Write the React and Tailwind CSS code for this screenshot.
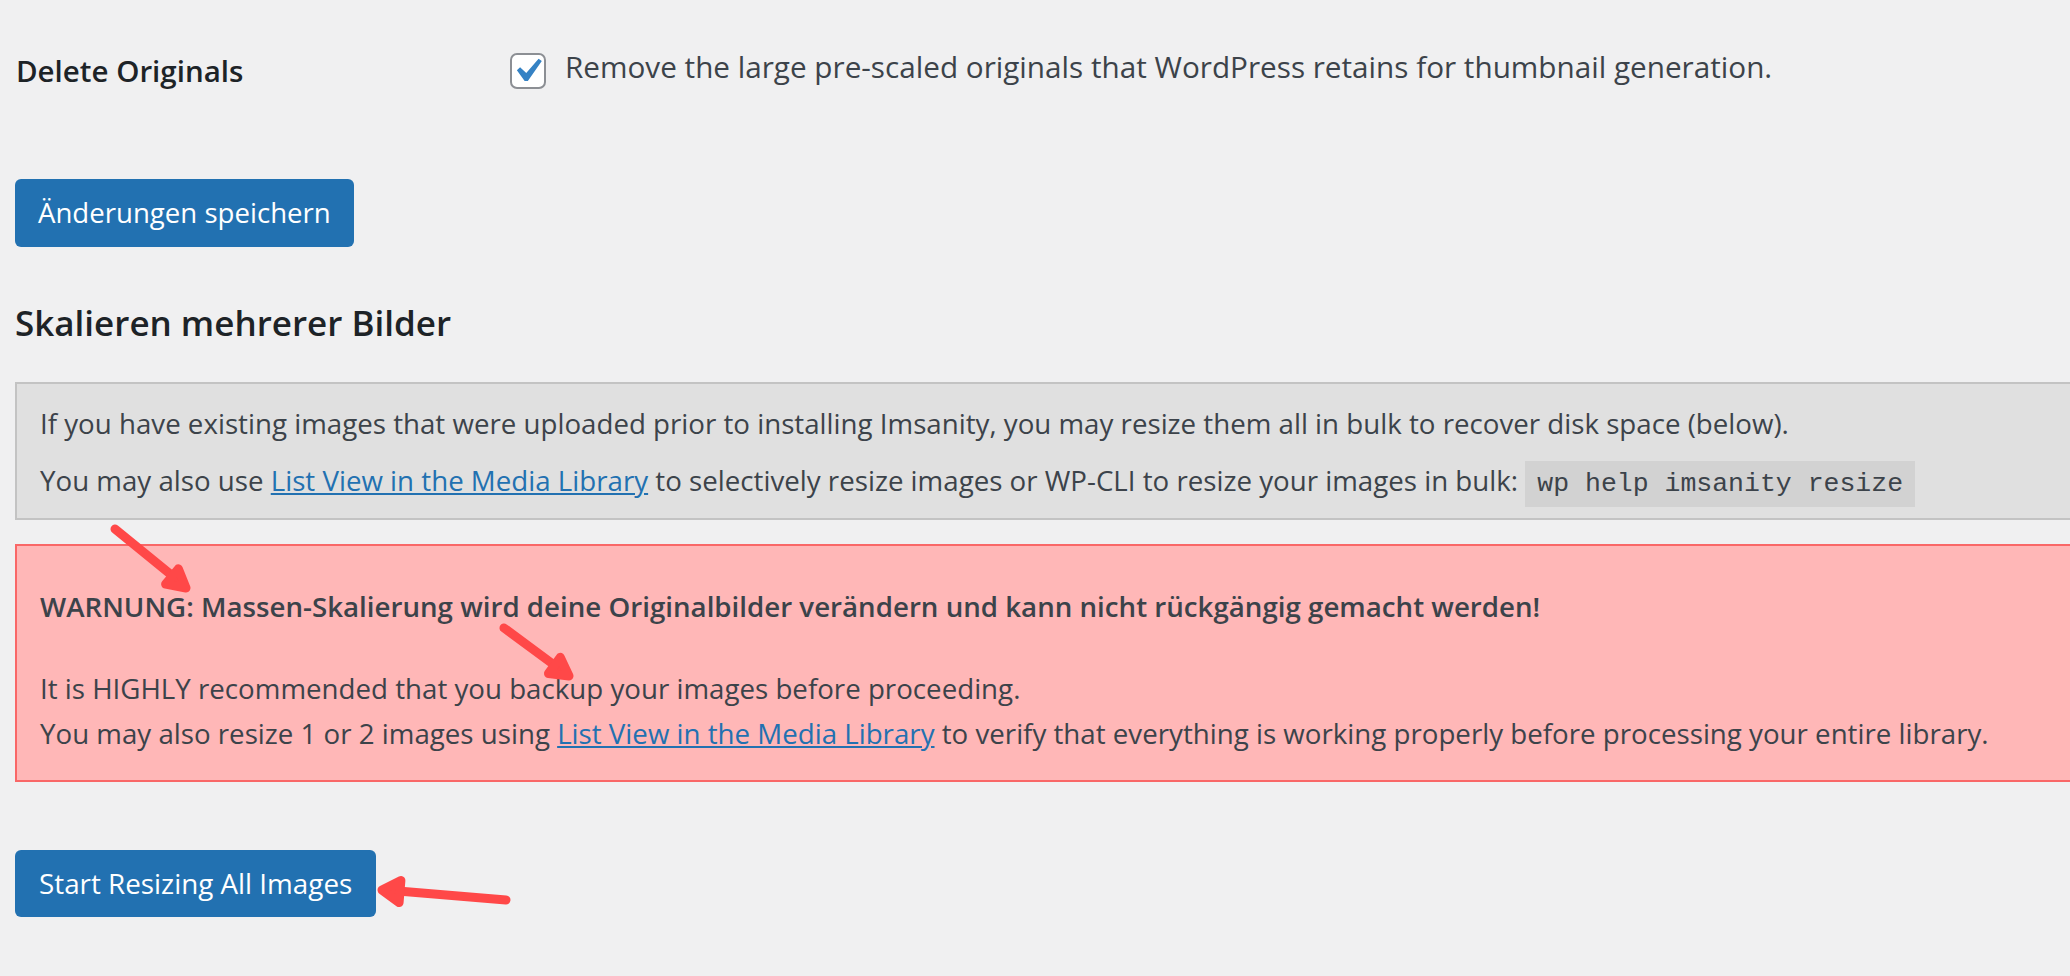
export default function App() {
  return (
    <div className="relative min-h-screen overflow-hidden bg-[#f0f0f1] font-['Open_Sans',sans-serif] text-[#3c434a]">
      <div className="pl-[15px] pt-[53px]">
        {/* settings row */}
        <div className="flex h-[36px] items-center">
          <div className="w-[495px] pl-px text-[29.5px] font-semibold text-[#1d2327]">Delete Originals</div>
          <label className="flex items-center">
            <span className="relative h-[36px] w-[36px] rounded-[7px] border-2 border-[#8c8f94] bg-white">
              <svg className="absolute left-[-9px] top-[-8px] h-[48px] w-[48px]" viewBox="0 0 20 20">
                <path fill="#3582c4" d="M14.83 4.89l1.34.94-5.81 8.38H9.02L5.78 9.67l1.34-1.25 2.57 2.4z" />
              </svg>
            </span>
            <span className="mb-2 ml-[19px] text-[29.7px]">
              Remove the large pre-scaled originals that WordPress retains for thumbnail generation.
            </span>
          </label>
        </div>

        <button className="mt-[90px] h-[68px] rounded-[6px] bg-[#2271b1] px-[23px] text-[27.6px] text-white">
          Änderungen speichern
        </button>

        <h2 className="mt-[54px] text-[35px] font-semibold leading-[44px] text-[#1d2327]">Skalieren mehrerer Bilder</h2>

        {/* info notice */}
        <div className="mt-[37px] border-2 border-r-0 border-[#c3c3c3] bg-[#e0e0e0] pb-[16px] pl-[23px] pt-[18px] text-[27.7px] leading-[43px]">
          <p>
            If you have existing images that were uploaded prior to installing Imsanity, you may resize them all in bulk to recover disk space (below).
          </p>
          <p className="mt-[14px]">
            You may also use{' '}
            <a href="#" className="text-[#2271b1] underline">List View in the Media Library</a>{' '}
            to selectively resize images or WP-CLI to resize your images in bulk:{' '}
            <code className="bg-[#d2d2d2] px-[12px] py-[8px] font-['Liberation_Mono',monospace] text-[26.5px] leading-[0]">wp help imsanity resize</code>
          </p>
        </div>

        {/* warning */}
        <div className="mt-[24px] border-2 border-r-0 border-[#f96767] bg-[#ffb7b7] pb-[24px] pl-[23px] pt-[38px] text-[27.7px] leading-[45px]">
          <p className="font-semibold">
            WARNUNG: Massen-Skalierung wird deine Originalbilder verändern und kann nicht rückgängig gemacht werden!
          </p>
          <p className="mt-[37px]">
            It is HIGHLY recommended that you backup your images before proceeding.
            <br />
            You may also resize 1 or 2 images using{' '}
            <a href="#" className="text-[#2271b1] underline">List View in the Media Library</a>{' '}
            to verify that everything is working properly before processing your entire library.
          </p>
        </div>

        <button className="mt-[68px] h-[67px] rounded-[6px] bg-[#2271b1] px-[24px] text-[27.8px] text-white">
          Start Resizing All Images
        </button>
      </div>

      {/* annotation arrows */}
      <svg className="pointer-events-none absolute left-0 top-0" width="2070" height="976">
        <g stroke="#ff4848" strokeWidth="9" strokeLinecap="round" strokeLinejoin="round" fill="#ff4848">
          <line x1="115" y1="529" x2="180" y2="582" />
          <polygon points="165.6,584.2 186,588 178.4,568.8" />
          <line x1="504" y1="628" x2="565" y2="673" />
          <polygon points="548.5,673.5 569,676 560.3,657.3" />
          <line x1="506" y1="900" x2="386" y2="890" />
          <polygon points="400.9,880.5 382,890 399.1,902.5" />
        </g>
      </svg>
    </div>
  );
}
